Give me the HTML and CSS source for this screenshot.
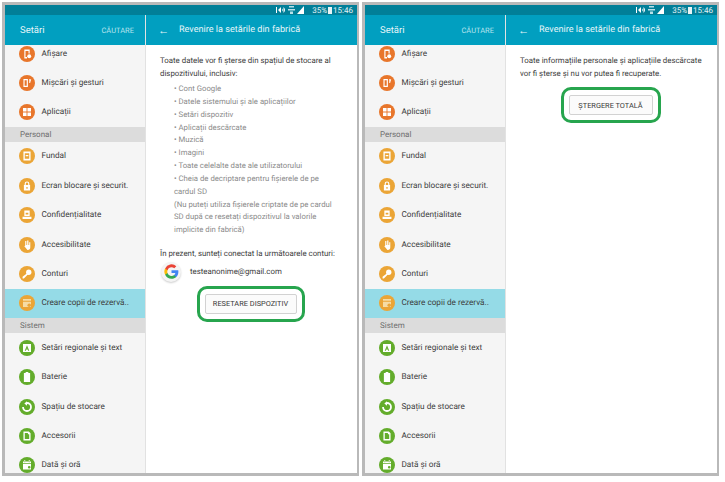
FILE: index.html
```html
<!DOCTYPE html>
<html lang="ro">
<head>
    <meta charset="UTF-8">
    <meta name="viewport" content="width=device-width, initial-scale=1.0">
    <title>Revenire la setările din fabrică</title>
    <link rel="stylesheet" href="styles.css">
</head>
<body>
    <svg class="sprites" width="0" height="0">
        <symbol id="status-icons" viewBox="0 0 29 8">
            <path d="M0 1h1v6H0zM2 4l3-3v6zM6 2.500c1 1 1 2 0 3zM7.500 1c2 2 2 4 0 6z" fill="#fff"/>
            <path d="M13 0h5v1.500h-5zM12 3h7v1.500h-7zM14 5.500h3V8h-3z" fill="#b9dfe8"/>
            <path d="M21 8l7-8v8z" fill="#fff"/>
        </symbol>
        <symbol id="i-display" viewBox="0 0 18 18"><circle cx="9" cy="9" r="9"/><path d="M6 4h6v4.500h-1.300V5.500H7.300v7H9V14H6z" fill="#fff"/><circle cx="11.500" cy="11.500" r="2.200" fill="#fff"/></symbol>
        <symbol id="i-motion" viewBox="0 0 18 18"><circle cx="9" cy="9" r="9"/><path d="M5 4.500h5v9H5zM6.300 6v6h2.400V6z" fill="#fff" fill-rule="evenodd"/><path d="M11.500 4.500l2.200.6-1.200 3.900h-1z" fill="#fff"/></symbol>
        <symbol id="i-apps" viewBox="0 0 18 18"><circle cx="9" cy="9" r="9"/><path d="M4.500 4.500h4v4h-4zM9.500 4.500h4v4h-4zM4.500 9.500h4v4h-4zM9.500 9.500h4v4h-4z" fill="#fff"/></symbol>
        <symbol id="i-wallpaper" viewBox="0 0 18 18"><circle cx="9" cy="9" r="9"/><path d="M5 4h8v10H5zM6.500 6v6h5V6zM7.500 8h3v1.200h-3z" fill="#fff" fill-rule="evenodd"/></symbol>
        <symbol id="i-lock" viewBox="0 0 18 18"><circle cx="9" cy="9" r="9"/><path d="M5.500 8h7v6h-7zM8.300 10v2h1.400v-2z" fill="#fff" fill-rule="evenodd"/><path d="M7 8V6.500a2 2 0 0 1 4 0V8" fill="none" stroke="#fff" stroke-width="1.300"/></symbol>
        <symbol id="i-privacy" viewBox="0 0 18 18"><circle cx="9" cy="9" r="9"/><path d="M6 4h6v6H6zM7.500 6.500v2h3v-2zM4 11h10v2.500H4z" fill="#fff" fill-rule="evenodd"/></symbol>
        <symbol id="i-access" viewBox="0 0 18 18"><circle cx="9" cy="9" r="9"/><path d="M7 4.500h1.300V9h.9V4h1.400v5h.9V6h1.200v5.500a3 3 0 0 1-3 3H9.500L6 10.500l1-.8z" fill="#fff"/></symbol>
        <symbol id="i-key" viewBox="0 0 18 18"><circle cx="9" cy="9" r="9"/><circle cx="11" cy="7" r="3" fill="#fff"/><path d="M9.500 8l1 1-5 5H4v-2z" fill="#fff"/></symbol>
        <symbol id="i-backup" viewBox="0 0 18 18"><circle cx="9" cy="9" r="9"/><path d="M4.500 4.500h9v2h-9zM4.500 7.500h9v6h-9z" fill="#f6dca4"/><circle cx="11.500" cy="11.500" r="2"/></symbol>
        <symbol id="i-language" viewBox="0 0 18 18"><circle cx="9" cy="9" r="9"/><path d="M4.500 4.500h9v9h-9zM9 6l-2.500 6h1.200l.5-1.300h1.600l.5 1.300h1.200zM8.600 9.700L9 8.700l.4 1z" fill="#fff" fill-rule="evenodd"/></symbol>
        <symbol id="i-battery" viewBox="0 0 18 18"><circle cx="9" cy="9" r="9"/><path d="M7.500 3.500h3v1h2v10h-7v-10h2z" fill="#fff"/></symbol>
        <symbol id="i-storage" viewBox="0 0 18 18"><circle cx="9" cy="9" r="9"/><path d="M9 4.500a4.500 4.500 0 1 1-4.500 4.500" fill="none" stroke="#fff" stroke-width="2"/><path d="M9 2.500l-3 2.500 3 2.500z" fill="#fff"/></symbol>
        <symbol id="i-accessory" viewBox="0 0 18 18"><circle cx="9" cy="9" r="9"/><path d="M5 4h6l2 2v8H5zM6.500 5.500v7h5V7H10V5.500z" fill="#fff" fill-rule="evenodd"/></symbol>
        <symbol id="i-date" viewBox="0 0 18 18"><circle cx="9" cy="9" r="9"/><path d="M4.500 5h9v2h-9zM4.500 8h9v6h-9zM6 3.500h1V6H6zM11 3.500h1V6h-1zM11.500 10a1.500 1.500 0 1 0 0 3 1.500 1.500 0 0 0 0-3z" fill="#fff" fill-rule="evenodd"/></symbol>
    </svg>

    <main class="screens">
        <section class="tablet">
            <div class="status-bar">
                <svg class="status-icons"><use href="#status-icons"/></svg>
                <span>35%</span><i class="battery"></i><span>15:46</span>
            </div>
            <div class="columns">
                <nav class="sidebar">
                    <header class="side-head"><span class="side-title">Setări</span><span class="side-search">CĂUTARE</span></header>
                    <ul class="menu">
                        <li class="row first orange"><svg><use href="#i-display"/></svg>Afișare</li>
                        <li class="row orange"><svg><use href="#i-motion"/></svg>Mișcări și gesturi</li>
                        <li class="row orange"><svg><use href="#i-apps"/></svg>Aplicații</li>
                        <li class="group">Personal</li>
                        <li class="row yellow"><svg><use href="#i-wallpaper"/></svg>Fundal</li>
                        <li class="row yellow"><svg><use href="#i-lock"/></svg>Ecran blocare și securit.</li>
                        <li class="row yellow"><svg><use href="#i-privacy"/></svg>Confidențialitate</li>
                        <li class="row yellow"><svg><use href="#i-access"/></svg>Accesibilitate</li>
                        <li class="row yellow"><svg><use href="#i-key"/></svg>Conturi</li>
                        <li class="row yellow selected"><svg><use href="#i-backup"/></svg>Creare copii de rezervă..</li>
                        <li class="group">Sistem</li>
                        <li class="row green"><svg><use href="#i-language"/></svg>Setări regionale și text</li>
                        <li class="row green"><svg><use href="#i-battery"/></svg>Baterie</li>
                        <li class="row green"><svg><use href="#i-storage"/></svg>Spațiu de stocare</li>
                        <li class="row green"><svg><use href="#i-accessory"/></svg>Accesorii</li>
                        <li class="row green"><svg><use href="#i-date"/></svg>Dată și oră</li>
                    </ul>
                </nav>
                <div class="detail">
                    <header class="detail-head"><span class="arrow">←</span>Revenire la setările din fabrică</header>
                    <div class="detail-body">
                        <p class="lead">Toate datele vor fi șterse din spațiul de stocare al dispozitivului, inclusiv:</p>
                        <ul class="wipe-list">
                            <li>• Cont Google</li>
                            <li>• Datele sistemului și ale aplicațiilor</li>
                            <li>• Setări dispozitiv</li>
                            <li>• Aplicații descărcate</li>
                            <li>• Muzică</li>
                            <li>• Imagini</li>
                            <li>• Toate celelalte date ale utilizatorului</li>
                            <li>• Cheia de decriptare pentru fișierele de pe cardul SD</li>
                            <li>(Nu puteți utiliza fișierele criptate de pe cardul SD după ce resetați dispozitivul la valorile implicite din fabrică)</li>
                        </ul>
                        <p class="lead accounts">În prezent, sunteți conectat la următoarele conturi:</p>
                        <div class="account">
                            <span class="g-badge">
                                <svg viewBox="0 0 24 24" width="15" height="15">
                                    <path d="M23 12.300c0-.8-.1-1.600-.2-2.300H12v4.400h6.200a5.300 5.300 0 0 1-2.300 3.500v2.800h3.700c2.200-2 3.400-5 3.400-8.400z" fill="#4285f4"/>
                                    <path d="M12 23.500c3.100 0 5.700-1 7.600-2.800l-3.700-2.800c-1 .7-2.300 1.100-3.900 1.100-3 0-5.500-2-6.400-4.700H1.800v2.900a11.500 11.500 0 0 0 10.200 6.300z" fill="#34a853"/>
                                    <path d="M5.600 14.300a6.900 6.900 0 0 1 0-4.400V7H1.800a11.500 11.500 0 0 0 0 10.300z" fill="#fbbc05"/>
                                    <path d="M12 5.100c1.700 0 3.200.6 4.400 1.700l3.300-3.300A11.500 11.500 0 0 0 1.800 7l3.800 2.900C6.500 7.100 9 5.100 12 5.100z" fill="#ea4335"/>
                                </svg>
                            </span>
                            <span>testeanonime@gmail.com</span>
                        </div>
                        <div class="action"><span class="ring"><button class="btn-wide">RESETARE DISPOZITIV</button></span></div>
                    </div>
                </div>
            </div>
        </section>

        <section class="tablet">
            <div class="status-bar">
                <svg class="status-icons"><use href="#status-icons"/></svg>
                <span>35%</span><i class="battery"></i><span>15:46</span>
            </div>
            <div class="columns">
                <nav class="sidebar">
                    <header class="side-head"><span class="side-title">Setări</span><span class="side-search">CĂUTARE</span></header>
                    <ul class="menu">
                        <li class="row first orange"><svg><use href="#i-display"/></svg>Afișare</li>
                        <li class="row orange"><svg><use href="#i-motion"/></svg>Mișcări și gesturi</li>
                        <li class="row orange"><svg><use href="#i-apps"/></svg>Aplicații</li>
                        <li class="group">Personal</li>
                        <li class="row yellow"><svg><use href="#i-wallpaper"/></svg>Fundal</li>
                        <li class="row yellow"><svg><use href="#i-lock"/></svg>Ecran blocare și securit.</li>
                        <li class="row yellow"><svg><use href="#i-privacy"/></svg>Confidențialitate</li>
                        <li class="row yellow"><svg><use href="#i-access"/></svg>Accesibilitate</li>
                        <li class="row yellow"><svg><use href="#i-key"/></svg>Conturi</li>
                        <li class="row yellow selected"><svg><use href="#i-backup"/></svg>Creare copii de rezervă..</li>
                        <li class="group">Sistem</li>
                        <li class="row green"><svg><use href="#i-language"/></svg>Setări regionale și text</li>
                        <li class="row green"><svg><use href="#i-battery"/></svg>Baterie</li>
                        <li class="row green"><svg><use href="#i-storage"/></svg>Spațiu de stocare</li>
                        <li class="row green"><svg><use href="#i-accessory"/></svg>Accesorii</li>
                        <li class="row green"><svg><use href="#i-date"/></svg>Dată și oră</li>
                    </ul>
                </nav>
                <div class="detail">
                    <header class="detail-head"><span class="arrow">←</span>Revenire la setările din fabrică</header>
                    <div class="detail-body">
                        <p class="lead">Toate informațiile personale și aplicațiile descărcate vor fi șterse și nu vor putea fi recuperate.</p>
                        <div class="action second"><span class="ring"><button class="btn-narrow">ȘTERGERE TOTALĂ</button></span></div>
                    </div>
                </div>
            </div>
        </section>
    </main>
</body>
</html>
```

FILE: styles.css
```css
* { box-sizing: border-box; }
body { margin: 0; background: #fff; font-family: Roboto, 'Liberation Sans', sans-serif; overflow: hidden; text-rendering: geometricPrecision; }
.sprites { position: absolute; }
.screens { display: flex; gap: 3px; padding: 2px 0 0 2px; width: 725px; height: 482px; }

.tablet { width: 357px; height: 474px; border: 3px solid #b9b9b9; border-right-width: 2px; display: flex; flex-direction: column; overflow: hidden; background: #fff; }
.status-bar { height: 10px; flex: none; background: #017f98; color: #e4f2f5; font-size: 8px; display: flex; justify-content: flex-end; align-items: center; gap: 1px; padding-right: 4px; }
.status-icons { width: 29px; height: 8px; margin-right: 6px; }
.battery { width: 4px; height: 7px; background: #e8f3f5; }

.columns { flex: 1; display: flex; min-height: 0; }
.sidebar { width: 141px; flex: none; background: #f5f5f5; border-right: 1px solid #e2e2e2; overflow: hidden; display: flex; flex-direction: column; }
.side-head { height: 30px; flex: none; background: #019fc0; color: #fff; display: flex; justify-content: space-between; align-items: center; padding: 0 11px 0 15px; }
.side-title { font-size: 9.500px; color: #e6f6f9; }
.side-search { font-size: 7.500px; color: #b5e4ee; }

.menu { list-style: none; margin: 0; padding: 0; }
.row { height: 29.400px; display: flex; align-items: center; gap: 6.500px; padding-left: 14px; font-size: 8.200px; color: #3b3b3b; white-space: nowrap; }
.row svg { width: 16px; height: 16px; flex: none; }
.first { height: 23px; padding-bottom: 5px; }
.orange svg { fill: #e8762b; }
.yellow svg { fill: #eba536; }
.green svg { fill: #63ac2b; }
.selected { background: #95dbe7; }
.group { height: 15px; background: #dcdcdc; color: #6e6e6e; font-size: 8px; display: flex; align-items: center; padding-left: 15px; }

.detail { flex: 1; display: flex; flex-direction: column; min-width: 0; }
.detail-head { height: 30px; flex: none; background: #019fc0; color: #e6f6f9; font-size: 9.100px; display: flex; align-items: center; padding-left: 12px; }
.arrow { width: 21px; font-size: 11px; }
.detail-body { padding: 9px 11px 0 14px; font-size: 7.850px; line-height: 13px; color: #3c3c3c; }
.lead { margin: 0; }
.wipe-list { list-style: none; margin: 3px 0 0; padding: 0 9px 0 14px; font-size: 7.750px; line-height: 12.850px; color: #8a8a8a; }
.accounts { margin-top: 10px; }
.account { display: flex; align-items: center; gap: 9px; margin: 1.500px 0 0 1px; }
.g-badge { width: 20px; height: 20px; border-radius: 50%; background: #f4f4f4; box-shadow: 0 1px 2px rgba(0,0,0,.2); display: flex; align-items: center; justify-content: center; }

.action { display: flex; justify-content: center; margin: 4px 5px 0 0; }
.action.second { margin-top: 7px; }
.ring { display: flex; padding: 5px; border: 3px solid #27a54e; border-radius: 10px; }
.ring button { background: #fbfbfb; border: 1px solid #d2d2d2; border-radius: 2px; font-family: inherit; font-size: 7.400px; color: #3a3a3a; height: 20px; padding: 0; }
.btn-wide { width: 92px; }
.btn-narrow { width: 84px; }
```
